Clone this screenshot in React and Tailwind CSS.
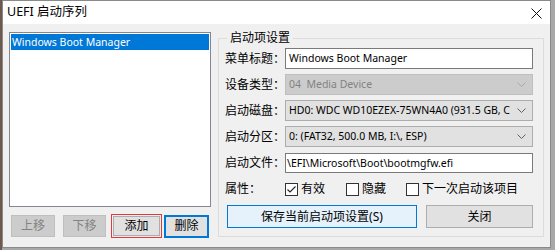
import React from "react"

const font = { fontFamily: '"Noto Sans", "Noto Sans CJK SC", sans-serif' }

function Chevron({ color = "#606060" }) {
  return (
    <svg width="9" height="6" viewBox="0 0 9 6" className="shrink-0">
      <path d="M0.5 0.5 L4.5 4.5 L8.5 0.5" fill="none" stroke={color} strokeWidth="1" />
    </svg>
  )
}

function Row({ label, children }) {
  return (
    <div className="flex items-center h-[21px]">
      <span className="w-[60px] shrink-0 text-[12px] text-black leading-none">{label}</span>
      {children}
    </div>
  )
}

function Check({ checked, label, width }) {
  return (
    <label className={`flex items-center gap-[3px] text-[12px] text-black leading-none ${width}`}>
      <span className="w-[13px] h-[13px] shrink-0 border border-[#333] bg-white flex items-center justify-center">
        {checked && (
          <svg width="11" height="11" viewBox="0 0 11 11">
            <path d="M1.5 5.5 L4 8 L9.5 2.5" fill="none" stroke="#222" strokeWidth="1.1" />
          </svg>
        )}
      </span>
      {label}
    </label>
  )
}

export default function App() {
  return (
    <div className="w-[555px] h-[250px] flex bg-[#a8a8a8] overflow-hidden" style={font}>
      <div className="w-[2px] h-full bg-[#6e5a4c]" />
      <div className="w-[549px] h-[248px] flex flex-col border border-[#8a8a8a] bg-[#f0f0f0]">
        {/* Title bar */}
        <div className="h-[23px] bg-white flex items-center justify-between pl-[4px] pr-[8px]">
          <span className="text-[12.5px] text-black leading-none">UEFI 启动序列</span>
          <svg width="11" height="11" viewBox="0 0 11 11" className="mt-[2px]">
            <path d="M0.5 0.5 L10.5 10.5 M10.5 0.5 L0.5 10.5" stroke="#111" strokeWidth="1" />
          </svg>
        </div>

        {/* Client area */}
        <div className="flex-1 flex gap-[7px] pl-[6px] pt-[6px]">
          {/* Left column */}
          <div className="w-[202px] flex flex-col">
            <div className="mt-[2px] h-[175px] bg-white border border-[#828790] p-[1px]">
              <div className="h-[16px] bg-[#0078d7] text-white text-[10.5px] leading-[16px] pl-[1px]">
                Windows Boot Manager
              </div>
            </div>
            <div className="mt-[7px] flex items-center h-[24px]">
              <button className="ml-[2px] w-[44px] h-[22px] bg-[#cccccc] border border-[#bfbfbf] text-[12px] leading-none text-[#838383]">上移</button>
              <button className="ml-[8px] w-[43px] h-[22px] bg-[#cccccc] border border-[#bfbfbf] text-[12px] leading-none text-[#838383]">下移</button>
              <div className="ml-[5px] w-[51px] h-[24px] border border-[#e0393e] p-[1px] flex">
                <button className="flex-1 bg-[#e1e1e1] border border-[#adadad] text-[12px] leading-none text-black">添加</button>
              </div>
              <button className="ml-[2px] w-[45px] h-[23px] bg-[#e1e1e1] border-2 border-[#0078d7] text-[12px] leading-none text-black">删除</button>
            </div>
          </div>

          {/* Group box */}
          <fieldset className="w-[326px] h-[207px] border border-[#dcdcdc] pl-[6px] pr-[10px]">
            <legend className="ml-[2px] px-[3px] text-[12px] leading-[16px] text-black">启动项设置</legend>
            <div className="flex flex-col gap-[5px] mt-[2px]">
              <Row label="菜单标题：">
                <div className="w-[248px] h-[21px] bg-white border border-[#7a7a7a] text-[10.5px] leading-[19px] pl-[3px] text-black">
                  Windows Boot Manager
                </div>
              </Row>
              <Row label="设备类型：">
                <div className="w-[248px] h-[21px] bg-[#cccccc] border border-[#bfbfbf] flex items-center justify-between pl-[3px] pr-[6px]">
                  <span className="text-[10.5px] text-[#838383]">04&nbsp; Media Device</span>
                  <Chevron color="#a8a8a8" />
                </div>
              </Row>
              <Row label="启动磁盘：">
                <div className="w-[248px] h-[21px] bg-[#e1e1e1] border border-[#adadad] flex items-center justify-between pl-[3px] pr-[6px]">
                  <span className="text-[10.5px] text-black whitespace-nowrap overflow-hidden">HD0: WDC WD10EZEX-75WN4A0 (931.5 GB, C</span>
                  <Chevron />
                </div>
              </Row>
              <Row label="启动分区：">
                <div className="w-[248px] h-[21px] bg-[#e1e1e1] border border-[#adadad] flex items-center justify-between pl-[3px] pr-[6px]">
                  <span className="text-[10.5px] text-black whitespace-nowrap">0: (FAT32, 500.0 MB, I:\, ESP)</span>
                  <Chevron />
                </div>
              </Row>
              <Row label="启动文件：">
                <div className="w-[248px] h-[20px] bg-white border border-[#7a7a7a] text-[10.5px] leading-[18px] pl-[1px] text-black">
                  \EFI\Microsoft\Boot\bootmgfw.efi
                </div>
              </Row>
              <div className="flex items-center h-[16px] mt-[3px]">
                <span className="w-[60px] shrink-0 text-[12px] text-black leading-none">属性：</span>
                <Check checked label="有效" width="w-[61px]" />
                <Check label="隐藏" width="w-[60px]" />
                <Check label="下一次启动该项目" width="" />
              </div>
            </div>
            <div className="flex mt-[8px] ml-[2px] gap-[9px]">
              <button className="w-[190px] h-[23px] bg-[#e5f1fb] border border-[#0078d7] text-[12px] text-black">保存当前启动项设置(S)</button>
              <button className="w-[107px] h-[23px] bg-[#e1e1e1] border border-[#adadad] text-[12px] text-black">关闭</button>
            </div>
          </fieldset>
        </div>
      </div>
    </div>
  )
}
